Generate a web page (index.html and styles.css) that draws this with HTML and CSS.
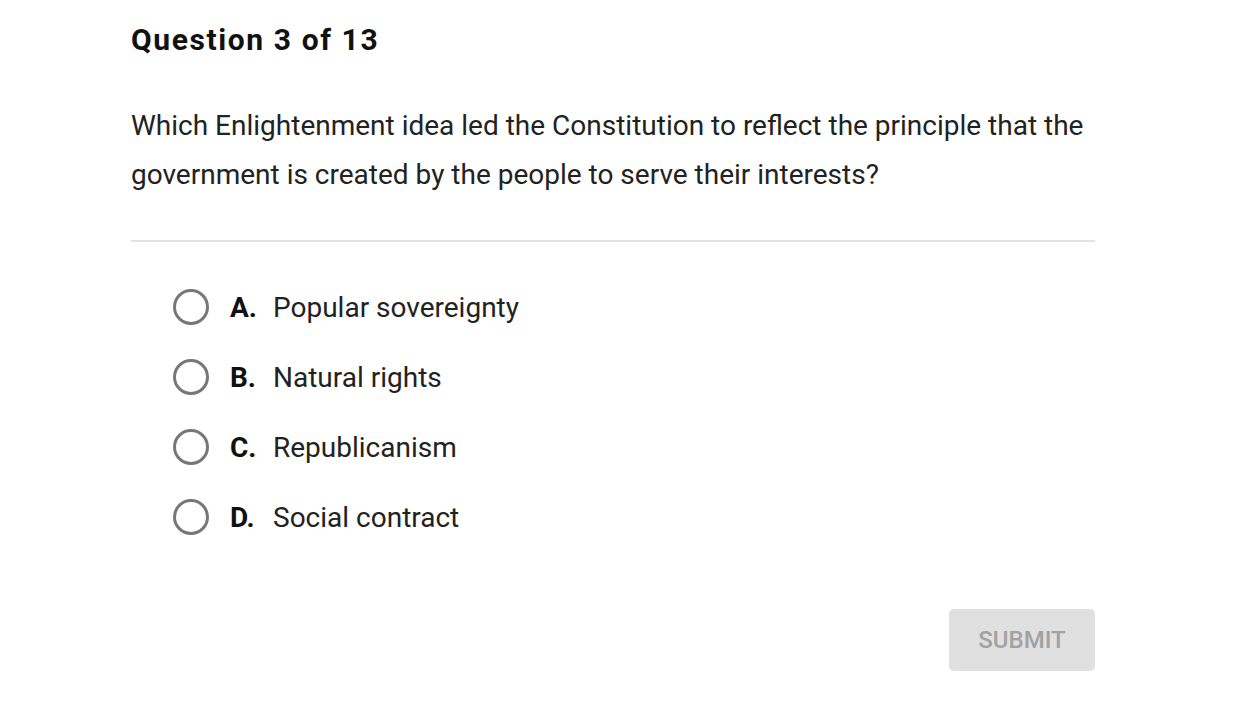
FILE: index.html
```html
<!DOCTYPE html>
<html>
<head>
<meta charset="utf-8">
<link rel="stylesheet" href="styles.css">
</head>
<body>
<main class="quiz">
  <h1 class="title">Question 3 of 13</h1>
  <p class="question">Which Enlightenment idea led the Constitution to reflect the principle that the government is created by the people to serve their interests?</p>
  <hr class="divider">
  <ul class="options">
    <li class="option"><span class="radio"></span><span class="letter">A.</span><span class="answer">Popular sovereignty</span></li>
    <li class="option"><span class="radio"></span><span class="letter">B.</span><span class="answer">Natural rights</span></li>
    <li class="option"><span class="radio"></span><span class="letter">C.</span><span class="answer">Republicanism</span></li>
    <li class="option"><span class="radio"></span><span class="letter">D.</span><span class="answer">Social contract</span></li>
  </ul>
  <div class="actions">
    <button class="submit">SUBMIT</button>
  </div>
</main>
</body>
</html>
```
FILE: styles.css
```css
html, body {
  margin: 0;
  padding: 0;
  background: #ffffff;
}
body {
  font-family: Roboto, "Liberation Sans", sans-serif;
  color: #222222;
}
.quiz {
  width: 964px;
  margin-left: 131px;
  padding-top: 20px;
}
.title {
  margin: 0;
  font-size: 30px;
  font-weight: 700;
  letter-spacing: 1.6px;
  line-height: 40px;
  color: #111111;
}
.question {
  margin: 41px 0 0 0;
  font-size: 28px;
  line-height: 49px;
  color: #222222;
}
.divider {
  margin: 41px 0 0 0;
  border: 0;
  height: 2px;
  background: #e4e4e4;
}
.options {
  list-style: none;
  margin: 30px 0 0 0;
  padding: 0 0 0 42px;
}
.option {
  display: flex;
  align-items: center;
  height: 70px;
  font-size: 28px;
}
.radio {
  width: 30px;
  height: 30px;
  border: 3px solid #777777;
  border-radius: 50%;
  box-sizing: content-box;
  flex: none;
}
.letter {
  font-weight: 700;
  margin-left: 21px;
  width: 43px;
  color: #111111;
}
.answer {
  color: #222222;
}
.actions {
  display: flex;
  justify-content: flex-end;
  margin-top: 57px;
}
.submit {
  width: 146px;
  height: 62px;
  border: 0;
  border-radius: 5px;
  background: #e0e0e0;
  color: #a2a2a2;
  font-family: Roboto, "Liberation Sans", sans-serif;
  font-size: 24px;
  font-weight: 500;
  padding: 0;
}
```
